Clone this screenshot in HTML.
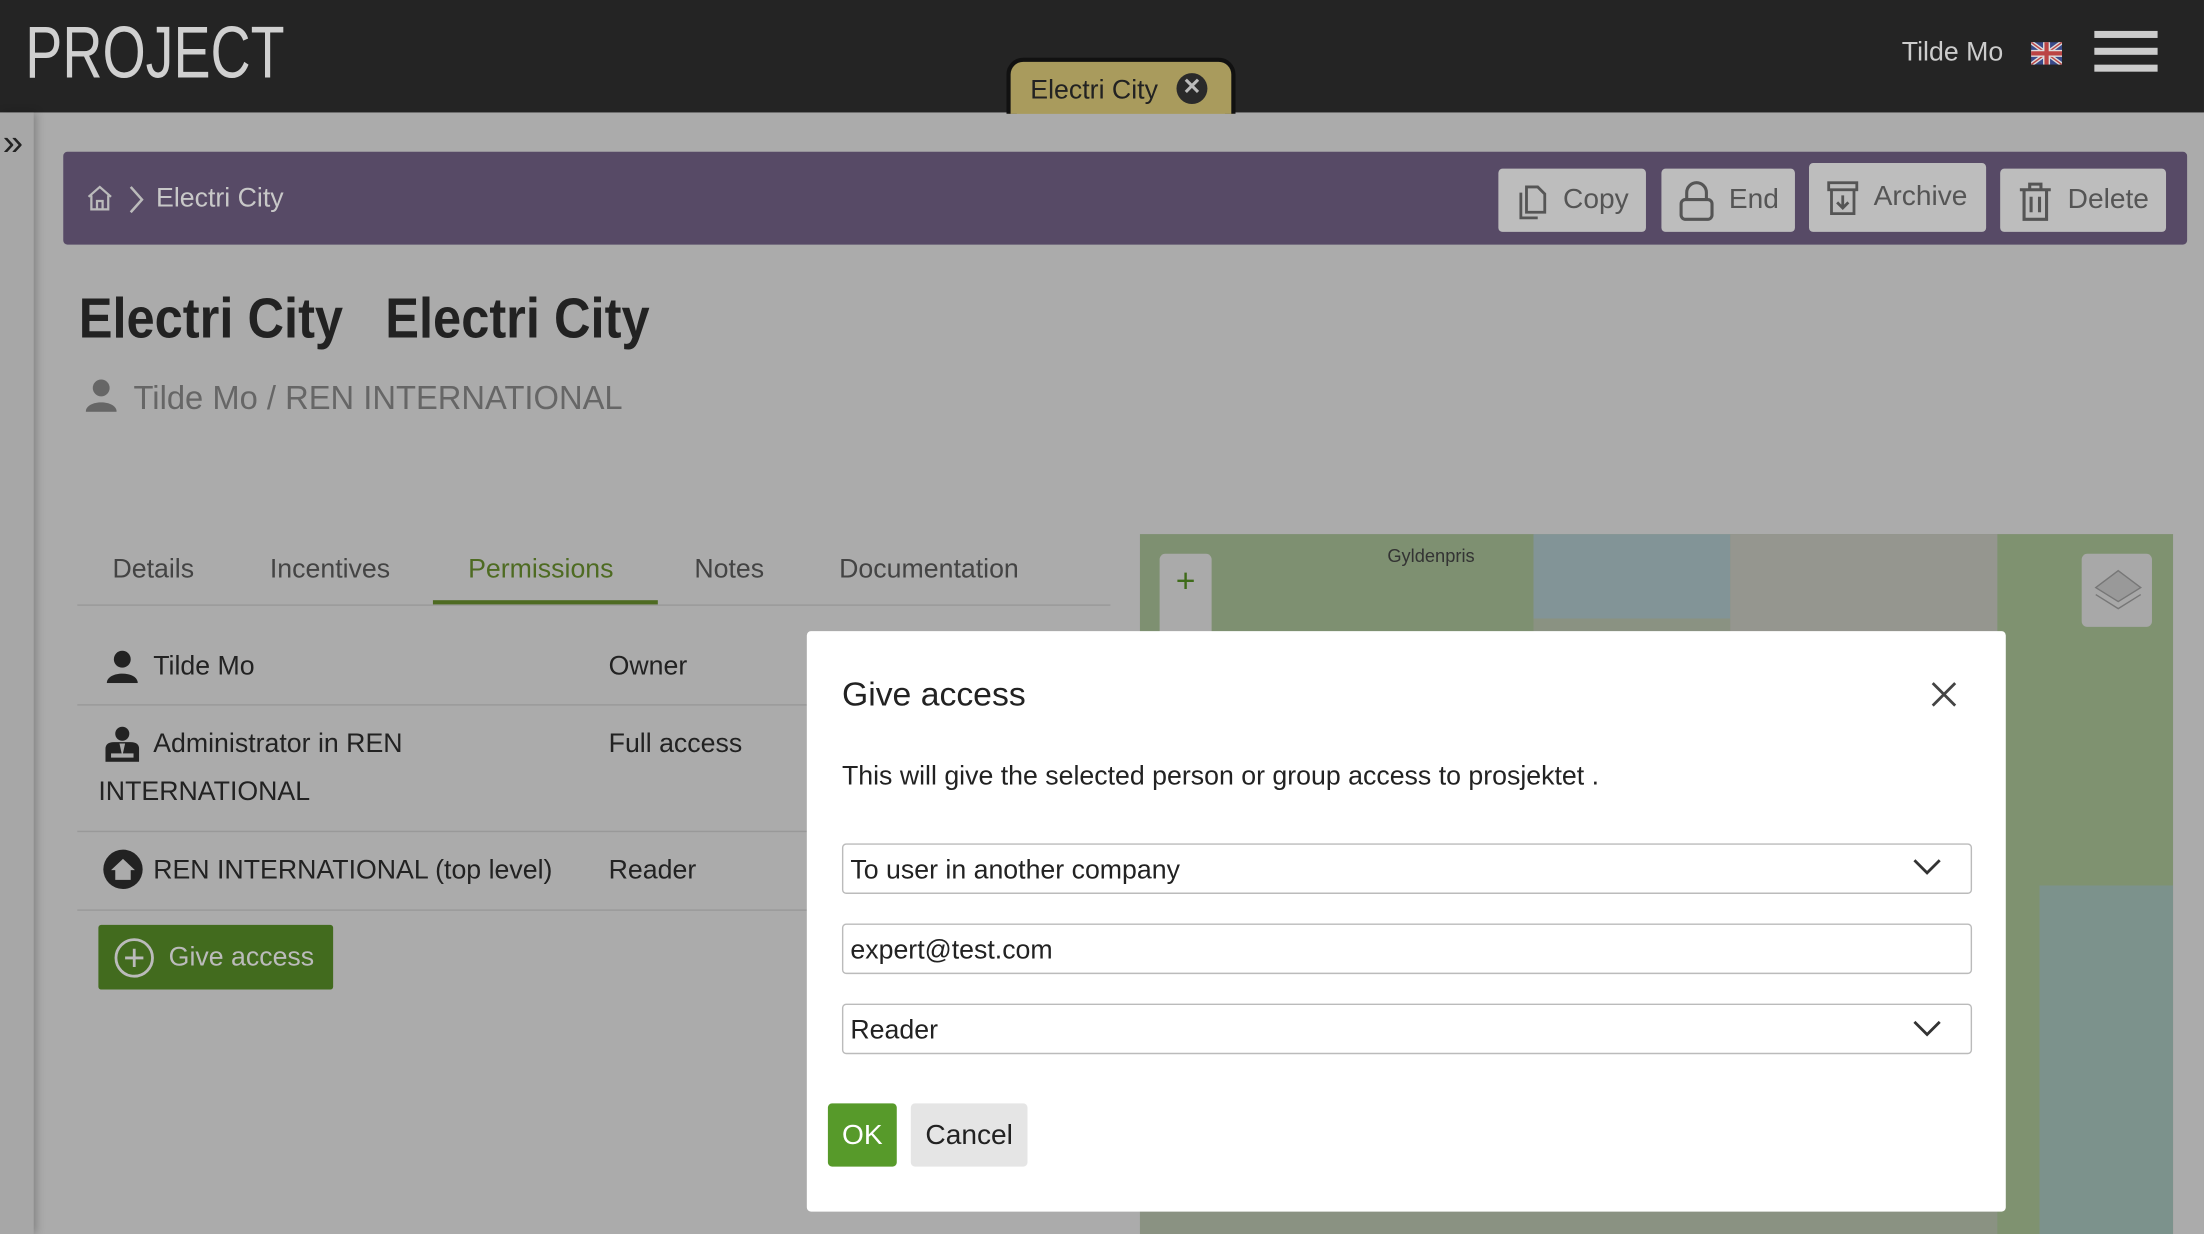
<!DOCTYPE html>
<html><head><meta charset="utf-8"><style>
*{box-sizing:border-box;margin:0;padding:0}
body{width:2204px;height:1234px;overflow:hidden;background:#ababab;font-family:"Liberation Sans",sans-serif}
#w{position:absolute;left:0;top:0;width:1568px;height:878px;transform:scale(1.4056);transform-origin:0 0;background:#ababab}
.a{position:absolute}
.btn{position:absolute;background:#bdbdbd;border-radius:3px;color:#555;font-size:20px;display:flex;align-items:center;gap:10px;padding-left:12px}
.row{position:absolute;left:55px;width:520px;font-size:19px;color:#222}
.sel{position:absolute;left:599px;width:804px;height:36px;border:1px solid #bbb;border-radius:3px;font-size:19px;color:#222;padding:8px 5px}
</style></head><body><div id="w">
<div class="a" style="left:0;top:0;width:1568px;height:80px;background:#242424"></div>
<div class="a" style="left:18px;top:8px;font-size:52px;color:#d0d0d0;font-weight:300;transform:scaleX(0.76);transform-origin:0 0">PROJECT</div>
<div class="a" style="left:716px;top:41px;width:163px;height:40px;background:#a99b5d;border:3px solid #111;border-bottom:none;border-radius:12px 12px 0 0"></div>
<div class="a" style="left:733px;top:54px;font-size:19px;color:#222">Electri City</div>
<div class="a" style="left:837px;top:52px;width:22px;height:22px;border-radius:50%;background:#2a2a2a;color:#bbb;font-size:16px;text-align:center;line-height:22px;font-weight:bold">✕</div>
<div class="a" style="left:1353px;top:27px;font-size:19px;color:#ccc">Tilde Mo</div>
<svg class="a" style="left:1445px;top:30px" width="22" height="16" viewBox="0 0 22 16"><rect width="22" height="16" fill="#3a4a8a"/><path d="M0 0L22 16M22 0L0 16" stroke="#ddd" stroke-width="3"/><path d="M0 0L22 16M22 0L0 16" stroke="#b44" stroke-width="1"/><path d="M11 0V16M0 8H22" stroke="#ddd" stroke-width="5"/><path d="M11 0V16M0 8H22" stroke="#b44" stroke-width="3"/></svg>
<div class="a" style="left:1490px;top:22px;width:45px;height:5px;background:#ccc"></div>
<div class="a" style="left:1490px;top:34px;width:45px;height:5px;background:#ccc"></div>
<div class="a" style="left:1490px;top:46px;width:45px;height:5px;background:#ccc"></div>
<div class="a" style="left:0;top:80px;width:24px;height:798px;background:#a7a7a7;box-shadow:2px 0 6px rgba(0,0,0,.25)"></div>
<div class="a" style="left:2px;top:86px;font-size:26px;color:#222">»</div>
<div class="a" style="left:45px;top:108px;width:1511px;height:66px;background:#574a66;border-radius:3px"></div>
<svg class="a" style="left:61px;top:131px" width="20" height="20" viewBox="0 0 20 20" fill="none" stroke="#bbb" stroke-width="1.6"><path d="M2 9L10 2L18 9M4 8V18H16V8M8 18V12H12V18"/></svg>
<svg class="a" style="left:91px;top:132px" width="12" height="20" viewBox="0 0 12 20" fill="none" stroke="#bbb" stroke-width="1.8"><path d="M2 1L10 10L2 19"/></svg>
<div class="a" style="left:111px;top:131px;font-size:19px;color:#c8c8c8">Electri City</div>
<div class="btn" style="left:1066px;top:120px;width:105px;height:45px"><svg width="24" height="28" viewBox="0 0 24 28" fill="none" stroke="#555" stroke-width="2"><path d="M8 4H16L21 9V22H8Z M4 8V26H16"/></svg>Copy</div>
<div class="btn" style="left:1182px;top:120px;width:95px;height:45px"><svg width="26" height="30" viewBox="0 0 26 30" fill="none" stroke="#555" stroke-width="2.2"><rect x="2" y="14" width="22" height="14" rx="3"/><path d="M6 14V9a7 7 0 0 1 14 0v5"/></svg>End</div>
<div class="btn" style="left:1287px;top:116px;width:126px;height:49px"><svg width="24" height="26" viewBox="0 0 24 26" fill="none" stroke="#555" stroke-width="2"><rect x="2" y="2" width="20" height="5"/><path d="M4 7V24H20V7M12 11V20M8 16L12 20L16 16"/></svg>Archive</div>
<div class="btn" style="left:1423px;top:120px;width:118px;height:45px"><svg width="26" height="30" viewBox="0 0 26 30" fill="none" stroke="#555" stroke-width="2.2"><path d="M2 7H24M9 7V3H17V7M5 7V28H21V7M10 12V23M16 12V23"/></svg>Delete</div>
<div class="a" style="left:56px;top:205px;font-size:40px;font-weight:bold;color:#222;white-space:nowrap;transform:scaleX(0.9);transform-origin:0 0">Electri City&nbsp;&nbsp; Electri City</div>
<svg class="a" style="left:61px;top:269px" width="22" height="24" viewBox="0 0 22 24" fill="#666"><circle cx="11" cy="7" r="6"/><path d="M0 24C0 15 22 15 22 24Z"/></svg>
<div class="a" style="left:95px;top:270px;font-size:24px;color:#666;white-space:nowrap;transform:scaleX(0.97);transform-origin:0 0">Tilde Mo / REN INTERNATIONAL</div>
<div class="a" style="left:80px;top:395px;font-size:19px;color:#444">Details</div>
<div class="a" style="left:192px;top:395px;font-size:19px;color:#444">Incentives</div>
<div class="a" style="left:333px;top:395px;font-size:19px;color:#4e6b22">Permissions</div>
<div class="a" style="left:494px;top:395px;font-size:19px;color:#444">Notes</div>
<div class="a" style="left:597px;top:395px;font-size:19px;color:#444">Documentation</div>
<div class="a" style="left:55px;top:430px;width:735px;height:1px;background:#999"></div>
<div class="a" style="left:308px;top:427px;width:160px;height:3px;background:#4e6b22"></div>
<svg class="a" style="left:75px;top:462px" width="24" height="24" viewBox="0 0 22 24" fill="#222"><circle cx="11" cy="7" r="6"/><path d="M0 24C0 15 22 15 22 24Z"/></svg>
<div class="row" style="top:464px;padding-left:54px">Tilde Mo<span class="a" style="left:378px">Owner</span></div>
<div class="a" style="left:55px;top:501px;width:520px;height:1px;background:#999"></div>
<svg class="a" style="left:75px;top:516px" width="24" height="26" viewBox="0 0 24 26" fill="#222"><circle cx="12" cy="6" r="5"/><path d="M0 26V17Q0 12 6 12H18Q24 12 24 17V26ZM10 13L12 22L14 13Z" /><rect x="4" y="20" width="16" height="3" fill="#ababab"/></svg>
<div class="row" style="top:519px;padding-left:54px">Administrator in REN<span class="a" style="left:378px">Full access</span></div>
<div class="row" style="top:553px;padding-left:15px">INTERNATIONAL</div>
<div class="a" style="left:55px;top:591px;width:520px;height:1px;background:#999"></div>
<svg class="a" style="left:73px;top:604px" width="29" height="29" viewBox="0 0 29 29"><circle cx="14.5" cy="14.5" r="14" fill="#222"/><path d="M6 15L14.5 7L23 15H20V22H9V15Z" fill="#ababab"/></svg>
<div class="row" style="top:609px;padding-left:54px">REN INTERNATIONAL (top level)<span class="a" style="left:378px">Reader</span></div>
<div class="a" style="left:55px;top:647px;width:520px;height:1px;background:#999"></div>
<div class="a" style="left:70px;top:658px;width:167px;height:46px;background:#426b1e;border-radius:2px;color:#bbb;font-size:19px;padding:13px 0 0 50px">Give access</div>
<svg class="a" style="left:81px;top:667px" width="29" height="29" viewBox="0 0 29 29" fill="none" stroke="#bbb" stroke-width="2"><circle cx="14.5" cy="14.5" r="13"/><path d="M14.5 8V21M8 14.5H21"/></svg>
<div class="a" style="left:811px;top:380px;width:735px;height:498px;overflow:hidden;background:#8a9282">
<div class="a" style="left:0;top:0;width:280px;height:70px;background:#7e9071"></div>
<div class="a" style="left:280px;top:0;width:140px;height:60px;background:#7f96a0;opacity:.7"></div>
<div class="a" style="left:420px;top:0;width:200px;height:70px;background:#95968f"></div>
<div class="a" style="left:610px;top:0;width:125px;height:498px;background:#7f9270"></div>
<div class="a" style="left:640px;top:250px;width:95px;height:248px;background:#7c9294;opacity:.8"></div>
<div class="a" style="left:176px;top:8px;font-size:13px;color:#333">Gyldenpris</div>
<div class="a" style="left:14px;top:14px;width:37px;height:60px;background:#aaa;border-radius:4px;color:#3f6b1a;font-size:24px;text-align:center;line-height:40px">+</div>
<div class="a" style="left:670px;top:14px;width:50px;height:52px;background:#a8a8a8;border-radius:4px"></div>
<svg class="a" style="left:676px;top:20px" width="40" height="40" viewBox="0 0 40 40" fill="#999" stroke="#777"><path d="M20 6L36 18L20 28L4 18Z"/><path d="M4 23L20 33L36 23" fill="none"/></svg>
</div>
<div class="a" style="left:574px;top:449px;width:853px;height:413px;background:#fff;border-radius:3px"></div>
<div class="a" style="left:599px;top:481px;font-size:24px;color:#222">Give access</div>
<svg class="a" style="left:1374px;top:485px" width="18" height="18" viewBox="0 0 18 18" stroke="#444" stroke-width="2"><path d="M1 1L17 17M17 1L1 17"/></svg>
<div class="a" style="left:599px;top:542px;font-size:19px;color:#222">This will give the selected person or group access to prosjektet .</div>
<div class="sel" style="top:600px">To user in another company</div>
<div class="sel" style="top:657px">expert@test.com</div>
<div class="sel" style="top:714px">Reader</div>
<svg class="a" style="left:1361px;top:611px" width="20" height="12" viewBox="0 0 20 12" fill="none" stroke="#333" stroke-width="2"><path d="M1 1L10 10L19 1"/></svg>
<svg class="a" style="left:1361px;top:726px" width="20" height="12" viewBox="0 0 20 12" fill="none" stroke="#333" stroke-width="2"><path d="M1 1L10 10L19 1"/></svg>
<div class="a" style="left:589px;top:785px;width:49px;height:45px;background:#579a2a;border-radius:3px;color:#fff;font-size:20px;text-align:center;line-height:46px">OK</div>
<div class="a" style="left:648px;top:785px;width:83px;height:45px;background:#e5e5e5;border-radius:3px;color:#222;font-size:20px;text-align:center;line-height:46px">Cancel</div>
</div></body></html>
